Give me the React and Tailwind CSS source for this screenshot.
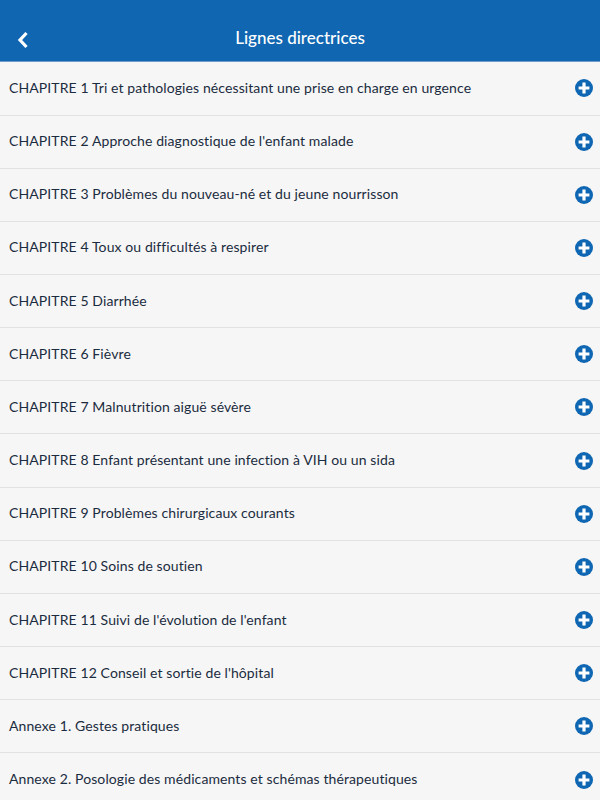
const chapters = [
  'CHAPITRE 1 Tri et pathologies nécessitant une prise en charge en urgence',
  "CHAPITRE 2 Approche diagnostique de l'enfant malade",
  'CHAPITRE 3 Problèmes du nouveau-né et du jeune nourrisson',
  'CHAPITRE 4 Toux ou difficultés à respirer',
  'CHAPITRE 5 Diarrhée',
  'CHAPITRE 6 Fièvre',
  'CHAPITRE 7 Malnutrition aiguë sévère',
  'CHAPITRE 8 Enfant présentant une infection à VIH ou un sida',
  'CHAPITRE 9 Problèmes chirurgicaux courants',
  'CHAPITRE 10 Soins de soutien',
  "CHAPITRE 11 Suivi de l'évolution de l'enfant",
  "CHAPITRE 12 Conseil et sortie de l'hôpital",
  'Annexe 1. Gestes pratiques',
  'Annexe 2. Posologie des médicaments et schémas thérapeutiques',
]

function PlusIcon() {
  return (
    <svg width="18" height="18" viewBox="0 0 18 18" className="shrink-0">
      <circle cx="9" cy="9" r="9" fill="#0f66b2" />
      <path d="M7.4 3.6h3.2v3.8h3.8v3.2h-3.8v3.8H7.4v-3.8H3.6V7.4h3.8z" fill="#ffffff" />
    </svg>
  )
}

export default function App() {
  return (
    <div className="h-[800px] w-[600px] overflow-hidden bg-[#f6f6f6] font-['Lato',sans-serif] [font-variant-ligatures:none]">
      {/* Header */}
      <header className="flex h-[62px] items-center border-b border-[#6f9acb] bg-[#1066b1] px-[17px] pt-[15px]">
        <svg width="12" height="18" viewBox="0 0 12 18" className="mt-[3px] shrink-0">
          <path d="M9.5 2 L3 9 L9.5 16" fill="none" stroke="#ffffff" strokeWidth="3.2" />
        </svg>
        <h1 className="flex-1 pr-[12px] text-center text-[17px] font-medium text-white">Lignes directrices</h1>
      </header>

      {/* Chapter list */}
      <ul className="pt-[0.4px]">
        {chapters.map((title) => (
          <li
            key={title}
            className="flex h-[53.167px] items-center justify-between border-b border-[#e2e2e2] pl-[9px] pr-[7px]"
          >
            <span className="pb-[2px] text-[14px] tracking-[0.1px] text-[#1b2c40]">{title}</span>
            <PlusIcon />
          </li>
        ))}
      </ul>
    </div>
  )
}
